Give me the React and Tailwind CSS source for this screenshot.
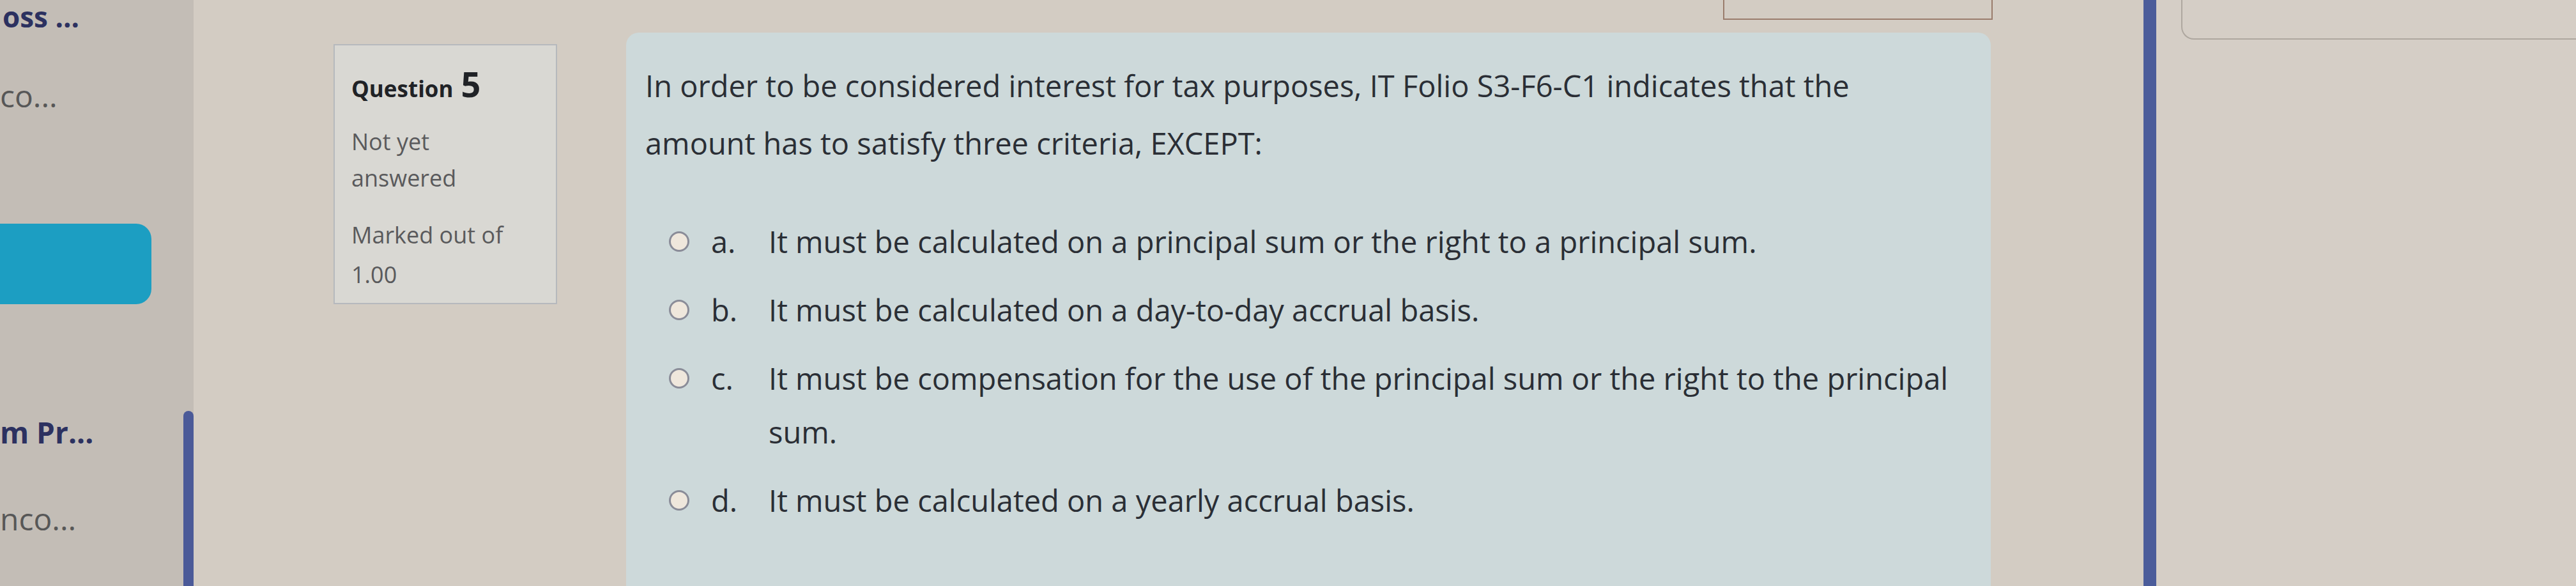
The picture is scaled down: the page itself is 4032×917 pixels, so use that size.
import React from "react";

const font = { fontFamily: '"Open Sans", "Noto Sans", sans-serif' };

function Radio() {
  return (
    <span className="w-[32px] h-[32px] shrink-0 rounded-full border-[3px] border-[#8a8c98] bg-[#efe7dc]" />
  );
}

function Option({ letter, children }) {
  return (
    <div className="flex items-start">
      <div className="h-[84px] flex items-center">
        <Radio />
      </div>
      <div className="w-[90px] ml-[34px] shrink-0 leading-[84px]">{letter}</div>
      <div className="flex-1 leading-[84px] whitespace-nowrap">{children}</div>
    </div>
  );
}

export default function App() {
  return (
    <div
      className="w-[4032px] h-[917px] overflow-hidden flex bg-[#d3ccc3] text-[#2a2e35]"
      style={font}
    >
      {/* left drawer */}
      <div className="relative w-[303px] shrink-0 h-full overflow-hidden bg-[#c3bdb6] flex flex-col">
        <div className="pl-[4px] h-[52px] leading-[52px] text-[44px] font-bold text-[#2c3160] whitespace-nowrap">
          oss ...
        </div>
        <div className="mt-[70px] h-[56px] leading-[56px] text-[48px] text-[#575757] whitespace-nowrap">
          co...
        </div>
        <div className="mt-[172px] w-[237px] h-[126px] rounded-r-[24px] bg-[#1c9ec2]" />
        <div className="mt-[172px] h-[56px] leading-[56px] text-[46px] font-bold text-[#2c3160] whitespace-nowrap">
          m Pr...
        </div>
        <div className="mt-[80px] h-[56px] leading-[56px] text-[48px] text-[#575757] whitespace-nowrap">
          nco...
        </div>
        <div className="absolute right-0 top-[643px] bottom-0 w-[16px] rounded-t-full bg-[#4b5a98]" />
      </div>

      {/* main */}
      <div className="w-[3052px] shrink-0 h-full pl-[219px] flex flex-col">
        <div className="h-[31px] shrink-0 flex">
          <div className="ml-[2175px] w-[422px] h-full border-2 border-t-0 border-[#9a7c6c]" />
        </div>
        <div className="mt-[20px] flex items-start gap-[108px]">
          {/* info box */}
          <div className="mt-[18px] w-[350px] h-[407px] shrink-0 border-2 border-[#b6b9bd] bg-[#d9d8d3] pl-[26px] pt-[20px] text-[36px] text-[#5a5a5c]">
            <div className="h-[60px] flex items-baseline text-[#202226] font-bold whitespace-nowrap">
              <span className="text-[35px]">Question</span>
              <span className="text-[54px] ml-[12px]">5</span>
            </div>
            <div className="mt-[42px] leading-[57px] whitespace-nowrap">
              Not yet
              <br />
              answered
            </div>
            <div className="mt-[30px] leading-[62px] whitespace-nowrap">
              Marked out of
              <br />
              1.00
            </div>
          </div>

          {/* question panel */}
          <div className="w-[2136px] h-[900px] shrink-0 rounded-[20px] bg-[#cdd9da] pl-[30px] pr-[20px] pt-[38px] text-[47px]">
            <div className="leading-[90px] whitespace-nowrap">
              In order to be considered interest for tax purposes, IT Folio S3-F6-C1 indicates that the
              <br />
              amount has to satisfy three criteria, EXCEPT:
            </div>
            <div className="mt-[67px] ml-[37px] flex flex-col gap-[23px]">
              <Option letter="a.">It must be calculated on a principal sum or the right to a principal sum.</Option>
              <Option letter="b.">It must be calculated on a day-to-day accrual basis.</Option>
              <Option letter="c.">
                It must be compensation for the use of the principal sum or the right to the principal
                <br />
                sum.
              </Option>
              <Option letter="d.">It must be calculated on a yearly accrual basis.</Option>
            </div>
          </div>
        </div>
      </div>

      {/* divider line */}
      <div className="w-[20px] shrink-0 h-full bg-[#4b5c9a]" />

      {/* right drawer */}
      <div className="flex-1 h-full bg-[#d5cec6]">
        <div className="ml-[39px] h-[62px] border-2 border-t-0 border-r-0 border-[#aea79f] rounded-bl-[20px]" />
      </div>
    </div>
  );
}
